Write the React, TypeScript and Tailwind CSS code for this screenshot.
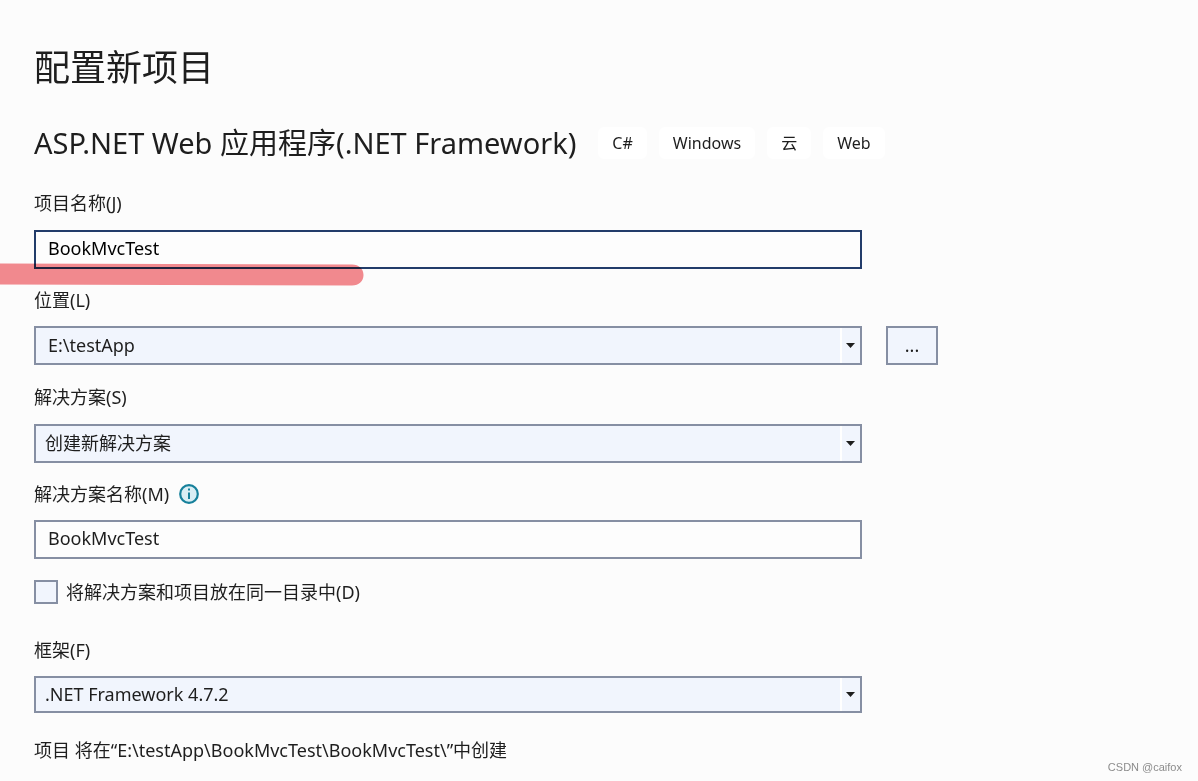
import React from 'react';

const TAGS = ['C#', 'Windows', '云', 'Web'];

const PROJECT_PATH = 'E:\\testApp\\BookMvcTest\\BookMvcTest\\';

interface FieldLabelProps {
  htmlFor: string;
  children: React.ReactNode;
}

const FieldLabel: React.FC<FieldLabelProps> = (props) => (
  <label htmlFor={props.htmlFor} className="block leading-7">
    {props.children}
  </label>
);

interface TextFieldProps {
  id: string;
  value: string;
  active?: boolean;
}

const TextField: React.FC<TextFieldProps> = (props) => (
  <input
    id={props.id}
    type="text"
    defaultValue={props.value}
    className={`block h-[39px] w-full border-2 bg-[#fdfdfd] px-3 pb-1 outline-none ${
      props.active ? 'border-[#223c6a] text-black' : 'border-[#868fa3]'
    }`}
  />
);

interface SelectFieldProps {
  id: string;
  value: string;
  className: string;
}

const SelectField: React.FC<SelectFieldProps> = (props) => (
  <div className="relative w-full max-w-[828px]">
    <select
      id={props.id}
      defaultValue={props.value}
      className={`block w-full appearance-none rounded-none border-2 border-[#868fa3] bg-[#f1f5fd] pr-8 outline-none ${props.className}`}
    >
      <option>{props.value}</option>
    </select>
    <span className="pointer-events-none absolute inset-y-0.5 right-0.5 flex w-5 items-center justify-center border-l-2 border-white">
      <svg width="10" height="5" viewBox="0 0 10 5" aria-hidden="true">
        <path d="M0 0h9L4.500 5z" fill="#1e1e1e" />
      </svg>
    </span>
  </div>
);

const InfoIcon: React.FC = () => (
  <svg width="20" height="20" viewBox="0 0 20 20" aria-hidden="true">
    <circle cx="10" cy="10" r="8.800" fill="#d9eef4" stroke="#16809b" strokeWidth="2.200" />
    <path d="M9 4.500h2v2H9zM9 8.500h2V15H9z" fill="#16809b" />
  </svg>
);

const MarkerStroke: React.FC = () => (
  <svg
    width="364"
    height="24"
    viewBox="0 0 364 24"
    className="pointer-events-none absolute top-8 -left-[34px] mix-blend-multiply"
    aria-hidden="true"
  >
    <path
      d="M0 1.500L352 2.500C359 2.500 363.500 7 363.500 13S359 23.500 352 23.500L0 22.500z"
      fill="#f48b90"
    />
  </svg>
);

export default function App() {
  return (
    <main className="relative min-h-screen bg-[#fcfcfc] px-[34px] pt-11 pb-4 font-['Noto_Sans','Noto_Sans_CJK_SC',sans-serif] text-[18px] text-[#1e1e1e]">
      <h1 className="text-4xl leading-[48px]">配置新项目</h1>

      <div className="mt-[31px] flex flex-wrap items-center gap-x-[22px]">
        <h2 className="text-[29px] leading-10">
          ASP.NET Web 应用程序(.NET Framework)
        </h2>
        <ul className="flex gap-3">
          {TAGS.map((tag) => (
            <li key={tag} className="rounded-md bg-white px-3.5 text-base leading-8">
              {tag}
            </li>
          ))}
        </ul>
      </div>

      <form className="mt-[26px]">
        <div className="flex max-w-[828px] flex-col gap-[13px]">
          <FieldLabel htmlFor="project-name">项目名称(J)</FieldLabel>
          <div className="relative">
            <TextField id="project-name" value="BookMvcTest" active />
            <MarkerStroke />
          </div>
        </div>

        <div className="mt-[17px] flex flex-col gap-3">
          <FieldLabel htmlFor="location">位置(L)</FieldLabel>
          <div className="flex gap-6">
            <SelectField id="location" value="E:\testApp" className="h-[39px] pl-3" />
            <button
              type="button"
              className="w-[52px] shrink-0 border-2 border-[#868fa3] bg-[#f1f5fd]"
            >
              ...
            </button>
          </div>
        </div>

        <div className="mt-[18px] flex flex-col gap-[13px]">
          <FieldLabel htmlFor="solution">解决方案(S)</FieldLabel>
          <SelectField id="solution" value="创建新解决方案" className="h-[39px] pl-[9px]" />
        </div>

        <div className="mt-[17px] flex max-w-[828px] flex-col gap-3">
          <div className="flex items-center gap-2.5">
            <FieldLabel htmlFor="solution-name">解决方案名称(M)</FieldLabel>
            <InfoIcon />
          </div>
          <TextField id="solution-name" value="BookMvcTest" />
        </div>

        <div className="mt-[21px] flex items-center gap-2">
          <input
            id="same-directory"
            type="checkbox"
            className="size-6 appearance-none border-2 border-[#868fa3] bg-[#f1f5fd] checked:bg-[#223c6a]"
          />
          <label htmlFor="same-directory" className="leading-6">
            将解决方案和项目放在同一目录中(D)
          </label>
        </div>

        <div className="mt-8 flex flex-col gap-3">
          <FieldLabel htmlFor="framework">框架(F)</FieldLabel>
          <SelectField id="framework" value=".NET Framework 4.7.2" className="h-[37px] pl-[9px]" />
        </div>

        <p className="mt-[23px] leading-7">项目 将在“{PROJECT_PATH}”中创建</p>
      </form>

      <span className="absolute right-4 bottom-1 font-['Liberation_Sans',sans-serif] text-[11px] leading-5 text-[#8c8c8c]">
        CSDN @caifox
      </span>
    </main>
  );
}
